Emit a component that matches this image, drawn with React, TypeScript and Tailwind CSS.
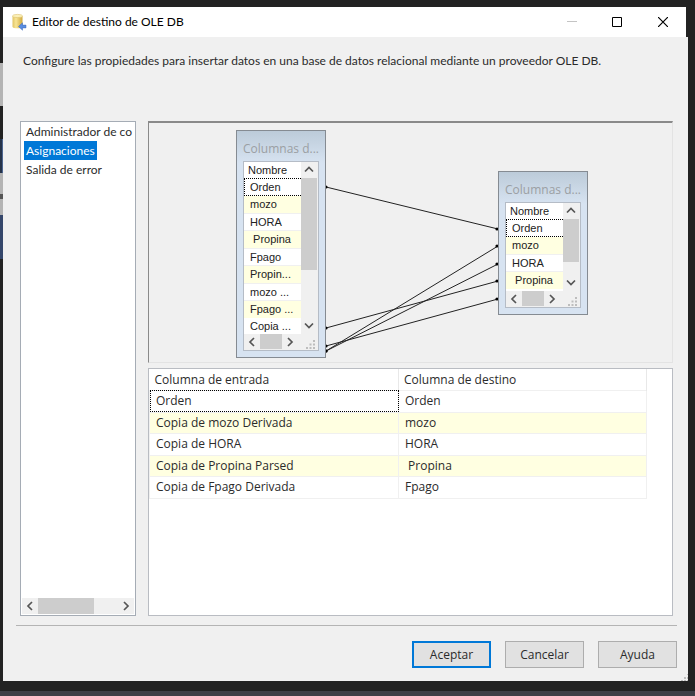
import React from "react";

const ui = "font-['Open_Sans','Noto_Sans',sans-serif]";
const narrow = "font-['Lato','Open_Sans',sans-serif]";
const grid = "font-['Liberation_Sans',Arial,sans-serif]";

type Dir = "up" | "down" | "left" | "right";

const chevrons: Record<Dir, string> = {
  up: "M1 6.5 5 2.5 9 6.5",
  down: "M1 2.5 5 6.5 9 2.5",
  left: "M7 1 3 5 7 9",
  right: "M3 1 7 5 3 9",
};

const dirLabels: Record<Dir, string> = {
  up: "Subir",
  down: "Bajar",
  left: "Izquierda",
  right: "Derecha",
};

function Arrow({ dir }: { dir: Dir }) {
  return (
    <button type="button" aria-label={dirLabels[dir]} className="flex size-4 shrink-0 items-center justify-center">
      <svg width="10" height="10" viewBox="0 0 10 10" fill="none" stroke="#555" strokeWidth="1.7">
        <path d={chevrons[dir]} />
      </svg>
    </button>
  );
}

function Grip() {
  return (
    <svg width="10" height="10" viewBox="0 0 10 10" fill="#bdbdbd" className="shrink-0">
      <path d="M7 0h2v2H7zM7 3.5h2v2H7zM3.5 3.5h2v2h-2zM7 7h2v2H7zM3.5 7h2v2h-2zM0 7h2v2H0z" />
    </svg>
  );
}

type NodeProps = { rows: string[]; place: string; listHeight: string; thumb: string };

function ColumnsNode({ rows, place, listHeight, thumb }: NodeProps) {
  return (
    <section
      className={`absolute w-[90px] border border-[#858b92] bg-[#d7e3f1] bg-linear-to-b from-[#bccbd9] to-[#d7e3f1] to-[32px] px-1.5 pb-1.5 ${place}`}
    >
      <h2 className={`h-[30px] whitespace-nowrap pt-2 text-[12px] leading-5 text-[#9b9fa3] ${ui}`}>Columnas d...</h2>
      <div className="border border-[#b5bcc6] bg-[#f0f0f0]">
        <div className={`flex ${listHeight}`}>
          <div className={`min-w-0 flex-1 bg-white text-[11px] text-[#222] ${grid}`}>
            <div className="h-4 pl-1 leading-4">Nombre</div>
            <ul>
              {rows.map((r, i) => (
                <li
                  key={i}
                  className={`whitespace-pre ${
                    i === 0
                      ? "h-[18px] border border-r-0 border-dotted border-black pl-[5px] leading-4"
                      : i % 2
                        ? "h-[17px] bg-[#ffffe1] pl-1.5 leading-4"
                        : i === rows.length - 1
                          ? "h-[14px] pl-1.5 leading-4"
                          : "h-[18px] border-y border-[#f0f0f0] pl-1.5 leading-4"
                  }`}
                >
                  {r}
                </li>
              ))}
            </ul>
          </div>
          <div className="flex w-[17px] shrink-0 flex-col pr-px">
            <Arrow dir="up" />
            <div className="flex-1">
              <div className={`bg-[#cdcdcd] ${thumb}`} />
            </div>
            <Arrow dir="down" />
          </div>
        </div>
        <div className="flex h-4">
          <Arrow dir="left" />
          <div className="mb-px w-[22px] bg-[#cdcdcd]" />
          <Arrow dir="right" />
          <div className="flex flex-1 items-end justify-end pr-0.5">
            <Grip />
          </div>
        </div>
      </div>
    </section>
  );
}

const sourceRows = ["Orden", "mozo", "HORA", " Propina", "Fpago", "Propin...", "mozo ...", "Fpago ...", "Copia ..."];
const targetRows = ["Orden", "mozo", "HORA", " Propina"];

const links = [
  [177, 64, 349, 106],
  [177, 228, 349, 123],
  [177, 228, 349, 141],
  [177, 205, 349, 158],
  [177, 223, 349, 176],
];

const mappings = [
  ["Orden", "Orden"],
  ["Copia de mozo Derivada", "mozo"],
  ["Copia de HORA", "HORA"],
  ["Copia de Propina Parsed", " Propina"],
  ["Copia de Fpago Derivada", "Fpago"],
];

function TitleBar() {
  return (
    <header className="mr-0.5 flex h-[30px] items-center bg-white pl-2">
      <svg width="16" height="18" viewBox="0 0 16 18">
        <defs>
          <linearGradient id="cyl" x1="0" x2="1">
            <stop offset="0" stopColor="#e0c464" />
            <stop offset=".35" stopColor="#f8e596" />
            <stop offset="1" stopColor="#cfa83c" />
          </linearGradient>
        </defs>
        <path d="M1.500 3v10.800c0 2 10 2 10 0V3z" fill="url(#cyl)" />
        <ellipse cx="6.500" cy="3" rx="5" ry="1.600" fill="#fbf0b8" stroke="#dcc06a" strokeWidth=".6" />
        <path d="M7.500 13.500 11.500 9.800v2.300H15v2.800h-3.500v2.300z" fill="#5a8de0" stroke="#3a68bd" strokeWidth=".5" />
      </svg>
      <h1 className={`ml-[5px] flex-1 text-[12px] leading-4 text-black ${narrow}`}>Editor de destino de OLE DB</h1>
      <div className="flex">
        <button type="button" aria-label="Minimizar" className="flex h-[30px] w-[45px] items-center justify-center text-[#c4c4c4]">
          <svg width="10" height="10"><path d="M0 4.500h10" stroke="currentColor" /></svg>
        </button>
        <button type="button" aria-label="Maximizar" className="flex h-[30px] w-[45px] items-center justify-center text-black">
          <svg width="10" height="10"><path d="M.5.5h9v9h-9z" fill="none" stroke="currentColor" /></svg>
        </button>
        <button type="button" aria-label="Cerrar" className="flex h-[30px] w-[47px] items-center justify-center text-black">
          <svg width="10" height="10"><path d="M0 0 10 10M10 0 0 10" stroke="currentColor" strokeWidth="1.200" /></svg>
        </button>
      </div>
    </header>
  );
}

function PageList() {
  const pages = ["Administrador de co", "Asignaciones", "Salida de error"];
  return (
    <nav className="flex w-[116px] shrink-0 flex-col border border-[#a5acb5] bg-white">
      <ul className="flex-1 pl-[3px]">
        {pages.map((p, i) => (
          <li key={p} className="flex h-[19px]">
            <button
              type="button"
              className={`h-[19px] whitespace-nowrap px-0.5 text-[12px] leading-[19px] ${narrow} ${
                i === 1 ? "bg-[#0078d7] text-white" : ""
              }`}
            >
              {p}
            </button>
          </li>
        ))}
      </ul>
      <div className="mx-px mb-px flex h-4 bg-[#f0f0f0]">
        <Arrow dir="left" />
        <div className="flex-1">
          <div className="h-4 w-14 bg-[#cdcdcd]" />
        </div>
        <Arrow dir="right" />
      </div>
    </nav>
  );
}

function Diagram() {
  return (
    <div className="relative h-[242px] border border-t-2 border-[#8a8a8a] border-r-[#e3e3e3] border-b-[#e3e3e3]">
      <svg className="absolute inset-0" width="100%" height="100%">
        {links.map(([x1, y1, x2, y2], i) => (
          <g key={i}>
            <line x1={x1} y1={y1} x2={x2} y2={y2} stroke="#222" />
            <circle cx={x1} cy={y1} r="1.600" />
            <circle cx={x2 - 1} cy={y2} r="1.600" />
          </g>
        ))}
      </svg>
      <ColumnsNode rows={sourceRows} place="left-[87px] top-[7px]" listHeight="h-[172px]" thumb="h-[92px]" />
      <ColumnsNode rows={targetRows} place="left-[349px] top-[48px]" listHeight="h-[88px]" thumb="h-[43px]" />
    </div>
  );
}

function MappingTable() {
  return (
    <div className="flex-1 border border-[#b9bcc2] bg-white">
      <table className="w-[498px] table-fixed border-collapse text-left text-[12px]">
        <thead>
          <tr className="h-[21px]">
            <th className="w-[249px] border-r border-[#e8e8e8] p-0 pl-[5px] pt-0.5 font-normal">Columna de entrada</th>
            <th className="border-r border-[#e8e8e8] p-0 pl-[5px] pt-0.5 font-normal">Columna de destino</th>
          </tr>
        </thead>
        <tbody>
          {mappings.map(([a, b], i) => (
            <tr key={a} className={i % 2 ? "h-[21px] bg-[#ffffe1]" : "h-[22px]"}>
              <td
                className={`border border-[#f0f0f0] p-0 pl-1.5 leading-5 ${
                  i === 0 ? "outline-1 -outline-offset-1 outline-dotted outline-black" : ""
                }`}
              >
                {a}
              </td>
              <td className="whitespace-pre border border-[#f0f0f0] p-0 pl-1.5 leading-5">{b}</td>
            </tr>
          ))}
        </tbody>
      </table>
    </div>
  );
}

export default function App() {
  const btn = "h-[27px] w-[79px] bg-[#e1e1e1] text-[12px] leading-4";
  return (
    <div className={`flex min-h-screen flex-col bg-[#222] text-[#2b2b2b] ${ui}`}>
      <div className="flex flex-1">
        <div className="flex w-[3px] shrink-0 flex-col">
          <div className="h-[63px]" />
          <div className="h-[43px] bg-[#b4b4b4]" />
          <div className="h-[33px]" />
          <div className="h-[34px] border-r border-[#4c658f] bg-[#26334a]" />
          <div className="h-[21px] bg-[#b4b4b4]" />
          <div className="h-[5px] bg-[#555]" />
          <div className="h-4 bg-[#b4b4b4]" />
          <div className="h-[44px] bg-[#35476b]" />
        </div>
        <div className="flex min-w-0 flex-1 flex-col pb-2.5 pt-[7px]">
          <TitleBar />
          <main className="relative flex flex-1 flex-col bg-[#f0f0f0] pl-[13px] pr-[11px]">
            <p className={`h-[84px] pl-[7px] pt-4 text-[12px] leading-4 ${narrow}`}>
              Configure las propiedades para insertar datos en una base de datos relacional mediante un proveedor OLE DB.
            </p>
            <div className="flex flex-1 gap-3 pl-1 pr-1">
              <PageList />
              <div className="flex min-w-0 flex-1 flex-col gap-[5px]">
                <Diagram />
                <MappingTable />
              </div>
            </div>
            <footer className="mt-[9px] flex h-14 justify-end gap-3.5 border-t border-[#b4b4b4] pt-[15px]">
              <button type="button" className={`${btn} border-2 border-[#0078d7]`}>Aceptar</button>
              <button type="button" className={`${btn} border border-[#adadad]`}>Cancelar</button>
              <button type="button" className={`${btn} border border-[#adadad]`}>Ayuda</button>
            </footer>
            <svg width="7" height="7" fill="#bdbdbd" className="absolute bottom-0 right-0">
              <path d="M6 0h1v1H6zM3 3h2v2H3zM6 3h1v2H6zM0 6h2v1H0zM3 6h2v1H3zM6 6h1v1H6z" />
            </svg>
          </main>
        </div>
        <div className="w-[7px] shrink-0" />
      </div>
      <div className="h-[5px] bg-[#3f3f46]" />
    </div>
  );
}
